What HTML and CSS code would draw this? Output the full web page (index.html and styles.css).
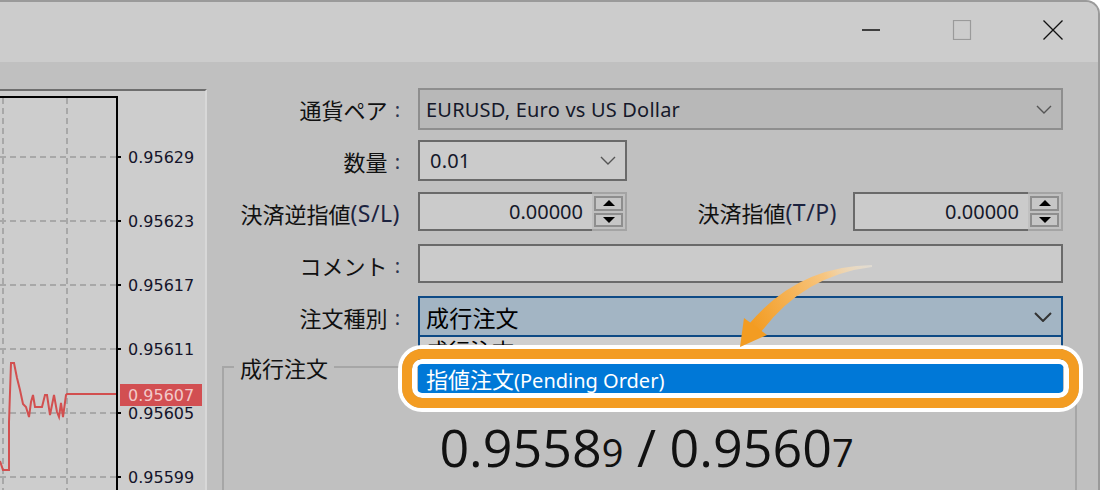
FILE: index.html
```html
<!DOCTYPE html>
<html lang="ja">
<head>
    <meta charset="UTF-8">
    <meta name="viewport" content="width=device-width, initial-scale=1.0">
    <title>新規注文</title>
    <link rel="stylesheet" href="styles.css">
</head>
<body>
<div class="window">
    <div class="titlebar">
        <div class="tb-btn">
            <svg width="20" height="20" viewBox="0 0 20 20"><line x1="1" y1="10" x2="19" y2="10" stroke="#111" stroke-width="1.6"/></svg>
        </div>
        <div class="tb-btn">
            <svg width="20" height="20" viewBox="0 0 20 20"><rect x="1.5" y="0.5" width="17" height="19" fill="none" stroke="#9a9a9a" stroke-width="1.2"/></svg>
        </div>
        <div class="tb-btn">
            <svg width="20" height="20" viewBox="0 0 20 20"><path d="M0.5 0.5 L19.5 19.5 M19.5 0.5 L0.5 19.5" stroke="#111" stroke-width="1.3"/></svg>
        </div>
    </div>

    <div class="main">
        <div class="chart-panel">
            <svg class="chart" width="205" height="399" viewBox="0 91 205 399">
                <g stroke="#a8a8a8" stroke-width="2" stroke-dasharray="6 4" fill="none">
                    <line x1="3" y1="98" x2="3" y2="490"/>
                    <line x1="67" y1="98" x2="67" y2="490"/>
                    <line x1="0" y1="157" x2="117" y2="157"/>
                    <line x1="0" y1="221" x2="117" y2="221"/>
                    <line x1="0" y1="285" x2="117" y2="285"/>
                    <line x1="0" y1="349" x2="117" y2="349"/>
                    <line x1="0" y1="413" x2="117" y2="413"/>
                    <line x1="0" y1="477" x2="117" y2="477"/>
                </g>
                <polyline points="0,461 3,470 9,470 9,422 11,363 14,363 17,378 20,390 23,404 26,407 29,417 31,402 33,395 35,407 42,407 45,395 47,395 50,415 52,405 54,395 57,412 59,417 61,403 63,417 66,395 67,394 117,394" fill="none" stroke="#d24f4f" stroke-width="2"/>
                <polyline points="0,97 117,97 117,490" fill="none" stroke="#000" stroke-width="2"/>
                <g stroke="#000" stroke-width="2">
                    <line x1="117" y1="157" x2="121" y2="157"/>
                    <line x1="117" y1="221" x2="121" y2="221"/>
                    <line x1="117" y1="285" x2="121" y2="285"/>
                    <line x1="117" y1="349" x2="121" y2="349"/>
                    <line x1="117" y1="413" x2="121" y2="413"/>
                    <line x1="117" y1="477" x2="121" y2="477"/>
                </g>
                <g class="axis-label">
                    <text x="128" y="163">0.95629</text>
                    <text x="128" y="227">0.95623</text>
                    <text x="128" y="291">0.95617</text>
                    <text x="128" y="355">0.95611</text>
                    <text x="128" y="419">0.95605</text>
                    <text x="128" y="483">0.95599</text>
                </g>
                <rect x="120" y="384" width="82" height="22" fill="#d24f52"/>
                <text class="axis-label current" x="128" y="401">0.95607</text>
            </svg>
        </div>

        <div class="order-form">
            <div class="fields">
                <div class="lbl">通貨ペア<span class="colon">:</span></div>
                <div class="combo combo-off">
                    <span>EURUSD, Euro vs US Dollar</span>
                    <svg class="chev" width="16" height="9" viewBox="0 0 16 9"><polyline points="1,1 8,8 15,1" fill="none" stroke="#555" stroke-width="1.4"/></svg>
                </div>

                <div class="lbl">数量<span class="colon">:</span></div>
                <div class="ctl-row">
                    <div class="combo combo-small">
                        <span>0.01</span>
                        <svg class="chev" width="16" height="9" viewBox="0 0 16 9"><polyline points="1,1 8,8 15,1" fill="none" stroke="#555" stroke-width="1.4"/></svg>
                    </div>
                </div>

                <div class="lbl">決済逆指値<span class="lat">(S/L)</span></div>
                <div class="ctl-row">
                    <div class="spin">
                        <div class="spin-input">0.00000</div>
                        <div class="spin-btns">
                            <div class="spin-btn"><span class="tri-up"></span></div>
                            <div class="spin-btn"><span class="tri-down"></span></div>
                        </div>
                    </div>
                    <div class="lbl lbl-inline">決済指値<span class="lat">(T/P)</span></div>
                    <div class="spin spin-wide">
                        <div class="spin-input">0.00000</div>
                        <div class="spin-btns">
                            <div class="spin-btn"><span class="tri-up"></span></div>
                            <div class="spin-btn"><span class="tri-down"></span></div>
                        </div>
                    </div>
                </div>

                <div class="lbl">コメント<span class="colon">:</span></div>
                <div class="text-input"></div>

                <div class="lbl">注文種別<span class="colon">:</span></div>
                <div class="order-type">
                    <div class="combo combo-active">
                        <span>成行注文</span>
                        <svg class="chev" width="18" height="10" viewBox="0 0 18 10"><polyline points="1,1 9,9 17,1" fill="none" stroke="#333" stroke-width="2"/></svg>
                    </div>
                    <div class="droplist">
                        <div class="drop-item first"><span>成行注文</span></div>
                        <div class="drop-item selected">指値注文<span class="lat">(Pending Order)</span></div>
                    </div>
                    <div class="highlight"></div>
                </div>
            </div>

            <fieldset class="group">
                <legend>成行注文</legend>
                <div class="quote">
                    <span>0.9558</span><span class="pip">9</span> / <span>0.9560</span><span class="pip">7</span>
                </div>
            </fieldset>
        </div>
    </div>

    <svg class="pointer" width="150" height="100" viewBox="0 0 150 100">
        <defs>
            <linearGradient id="arrowFade" gradientUnits="userSpaceOnUse" x1="142" y1="11" x2="25" y2="75">
                <stop offset="0" stop-color="#fdf1dc" stop-opacity="0.4"/>
                <stop offset="0.35" stop-color="#f7c57f"/>
                <stop offset="1" stop-color="#f39c22"/>
            </linearGradient>
        </defs>
        <path d="M142 10 Q68 11 19 69 L31 77 Q74 20 142 12 Z" fill="url(#arrowFade)"/>
        <polygon points="10,92 14,63 37,80" fill="#f39c22"/>
    </svg>
</div>
</body>
</html>
```

FILE: styles.css
```css
* {
    box-sizing: border-box;
}
body {
    margin: 0;
    background: #ffffff;
    font-family: "Noto Sans", "Noto Sans CJK JP", sans-serif;
    color: #111;
}
.window {
    position: relative;
    width: 1100px;
    height: 490px;
    border-top: 2px solid #9a9a9a;
    border-right: 2px solid #9a9a9a;
    border-top-right-radius: 14px;
    background: #c0c0c0;
    overflow: hidden;
}
.titlebar {
    height: 60px;
    background: #cccccc;
    display: flex;
    justify-content: flex-end;
}
.tb-btn {
    width: 91px;
    display: flex;
    justify-content: center;
    padding-top: 18px;
}
.main {
    display: flex;
    height: 428px;
}

/* chart */
.chart-panel {
    width: 207px;
    margin-top: 27px;
    border-top: 2px solid #6e6e6e;
    border-right: 2px solid #d8d8d8;
    background: #cdcdcd;
}
.chart {
    display: block;
}
.axis-label text, .axis-label {
    font-family: "DejaVu Sans", sans-serif;
    font-size: 16px;
    fill: #14142a;
}
.axis-label.current {
    fill: #f2c9c9;
}

/* form */
.order-form {
    flex: 1;
    padding-top: 26px;
}
.fields {
    display: grid;
    grid-template-columns: 193px 645px;
    grid-auto-rows: 42px;
    column-gap: 18px;
    row-gap: 10px;
}
.lbl {
    display: flex;
    align-items: center;
    justify-content: flex-end;
    font-family: "Noto Sans CJK JP", sans-serif;
    font-size: 22px;
    color: #111;
    white-space: nowrap;
}
.lbl .lat {
    font-family: "Noto Sans", sans-serif;
    font-size: 23px;
    letter-spacing: 0.5px;
    color: #1c2340;
}
.colon {
    font-family: "Noto Sans", sans-serif;
    font-size: 20px;
    color: #2c3550;
    margin-left: 7px;
}
.ctl-row {
    display: flex;
    align-items: flex-start;
}
.combo {
    display: flex;
    align-items: center;
    justify-content: space-between;
    height: 42px;
    padding: 0 9px 0 6px;
    font-size: 20px;
    letter-spacing: 0.2px;
    color: #15182a;
}
.combo-off {
    background: #b8b8b8;
    border: 2px solid #8e8e8e;
}
.combo-small {
    width: 209px;
    height: 41px;
    padding-left: 10px;
    background: #cbcbcb;
    border: 2px solid #6a6a6a;
}
.combo-active {
    height: 41px;
    background: #a3b5c4;
    border: 2px solid #0e4a85;
    font-family: "Noto Sans CJK JP", sans-serif;
    font-size: 23px;
    color: #000;
}
.spin {
    display: flex;
    width: 209px;
    height: 39px;
}
.spin-wide {
    width: 210px;
}
.spin-input {
    flex: 1;
    display: flex;
    align-items: center;
    justify-content: flex-end;
    padding-right: 9px;
    background: #cbcbcb;
    border: 2px solid #6a6a6a;
    border-right: none;
    font-size: 20px;
    color: #15182a;
}
.spin-btns {
    width: 35px;
    display: flex;
    flex-direction: column;
    gap: 2px;
    padding: 2px;
    border: 2px solid #a4a4a4;
    border-left: none;
    background: #c0c0c0;
}
.spin-btn {
    flex: 1;
    display: flex;
    align-items: center;
    justify-content: center;
    border: 2px solid #8e8e8e;
    background: #c6c6c6;
}
.tri-up, .tri-down {
    width: 0;
    height: 0;
    border-left: 6px solid transparent;
    border-right: 6px solid transparent;
}
.tri-up {
    border-bottom: 6px solid #000;
}
.tri-down {
    border-top: 6px solid #000;
}
.lbl-inline {
    flex: 1;
    height: 39px;
    padding-right: 16px;
}
.text-input {
    height: 39px;
    background: #cbcbcb;
    border: 2px solid #6a6a6a;
}
.order-type {
    position: relative;
}
.droplist {
    position: absolute;
    top: 41px;
    left: 0;
    right: 0;
    height: 60px;
    background: #cfcfcf;
    border: 2px solid #0e4a85;
    border-top: none;
    font-family: "Noto Sans CJK JP", sans-serif;
    font-size: 22px;
}
.drop-item {
    height: 26px;
    line-height: 26px;
    padding-left: 6px;
    color: #000;
}
.drop-item.first {
    height: 8px;
    margin-bottom: 18px;
    overflow: hidden;
}
.drop-item.first span {
    display: block;
    line-height: 26px;
    margin-top: -1px;
}
.drop-item.selected {
    height: 30px;
    line-height: 30px;
    margin: 0 -2px;
    padding-left: 8px;
    background: #0078d7;
    color: #fff;
}
.drop-item .lat {
    font-family: "Noto Sans", sans-serif;
    font-size: 20px;
}
.highlight {
    position: absolute;
    left: -16px;
    top: 53px;
    width: 677px;
    height: 59px;
    border: 10px solid #f39c22;
    border-radius: 20px;
    box-shadow: 0 0 0 4px #fff, inset 0 0 0 5px #fff;
}

/* group box */
.group {
    margin: 17px 21px 0 15px;
    padding: 0;
    height: 200px;
    border: 2px solid #a6a6a6;
}
.group legend {
    margin-left: 10px;
    padding: 0 6px;
    font-family: "Noto Sans CJK JP", sans-serif;
    font-size: 22px;
    line-height: 24px;
}
.quote {
    margin-top: 38px;
    padding-right: 6px;
    text-align: center;
    font-family: "Open Sans", sans-serif;
    font-size: 52px;
    line-height: 60px;
    color: #111;
}
.quote .pip {
    font-size: 38px;
}

.pointer {
    position: absolute;
    left: 730px;
    top: 253px;
}
```
